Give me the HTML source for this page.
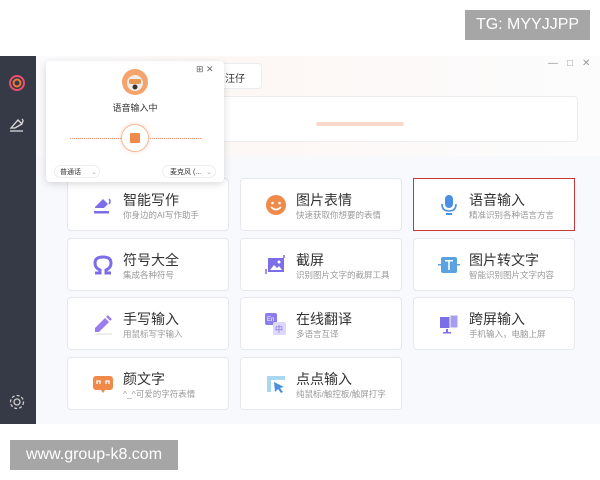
<!DOCTYPE html>
<html><head><meta charset="utf-8"><style>
*{margin:0;padding:0;box-sizing:border-box}
body{width:600px;height:480px;background:#fff;position:relative;overflow:hidden;font-family:"Liberation Sans","Noto Sans CJK SC",sans-serif}
.abs{position:absolute}
.tag{background:#a6a6a6;color:#fff;display:flex;align-items:center;justify-content:center}
#app{left:0;top:56px;width:600px;height:368px;background:#f8f9fc}
#side{left:0;top:56px;width:36px;height:368px;background:#363a47}
.card{position:absolute;width:162px;height:53px;background:#fff;border:1px solid #e6e8ee;border-radius:4px}
.card .ic{position:absolute;left:24px;top:15px;width:22px;height:22px}
.card .t{position:absolute;left:55px;top:11px;font-size:14px;color:#333}
.card .s{position:absolute;left:55px;top:30px;font-size:8.5px;color:#999}
#pop{left:46px;top:61px;width:178px;height:121px;background:#fff;border-radius:4px;box-shadow:0 2px 8px rgba(0,0,0,.15)}
</style></head><body>
<div class="abs tag" style="left:465px;top:10px;width:125px;height:30px;font-size:16px">TG: MYYJJPP</div>
<div class="abs tag" style="left:10px;top:440px;width:168px;height:30px;font-size:16px">www.group-k8.com</div>
<div class="abs" id="app"></div>
<div class="abs" style="left:36px;top:56px;width:564px;height:100px;background:linear-gradient(90deg,#fbfbfd,#fdf8f5 40%,#fcfcfd)"></div>
<div class="abs" style="left:60px;top:96px;width:518px;height:46px;background:#fff;border:1px solid #ebecf0;border-radius:4px"></div>
<div class="abs" style="left:316px;top:122px;width:88px;height:4px;background:#f9d9cc;border-radius:2px"></div>
<div class="abs" style="left:210px;top:63px;width:52px;height:26px;background:#fff;border:1px solid #ebecf0;border-radius:4px;font-size:10px;color:#333;padding:6px 0 0 14px">汪仔</div>
<div class="abs" style="left:548px;top:58px;font-size:10px;color:#999;letter-spacing:9px">—□✕</div>
<div class="abs" id="side"></div>
<svg class="abs" style="left:8px;top:74px" width="18" height="18"><circle cx="9" cy="9" r="7" fill="none" stroke="#e8506e" stroke-width="2"/><circle cx="9" cy="9" r="3.5" fill="none" stroke="#f07a3a" stroke-width="2"/></svg>
<svg class="abs" style="left:8px;top:116px" width="18" height="18"><path d="M3 12 L10 4 L14 8 L7 12 Z M2 15 H15 M14 3 Q16 5 14 7" fill="none" stroke="#ddd" stroke-width="1.3"/></svg>
<svg class="abs" style="left:8px;top:393px" width="18" height="18"><circle cx="9" cy="9" r="3" fill="none" stroke="#ccc" stroke-width="1.3"/><circle cx="9" cy="9" r="6.5" fill="none" stroke="#ccc" stroke-width="1.3" stroke-dasharray="3 2"/></svg>

<div class="card" style="left:67px;top:178px"><svg class="ic" viewBox="0 0 22 22"><path d="M3 13 L11 5 L16 10 L12 14 H3Z" fill="#7b6ee8"/><path d="M17 5 Q19 7 17 10" stroke="#7b6ee8" fill="none" stroke-width="1.5"/><rect x="2" y="17" width="15" height="2.5" fill="#7b6ee8"/></svg><div class="t">智能写作</div><div class="s">你身边的AI写作助手</div></div>
<div class="card" style="left:240px;top:178px"><svg class="ic" viewBox="0 0 22 22"><circle cx="11" cy="11" r="10" fill="#f08a4b"/><circle cx="7.5" cy="9" r="1.3" fill="#fff"/><circle cx="14.5" cy="9" r="1.3" fill="#fff"/><path d="M6 13 Q11 18 16 13" stroke="#fff" stroke-width="1.6" fill="none"/></svg><div class="t">图片表情</div><div class="s">快速获取你想要的表情</div></div>
<div class="card" style="left:413px;top:178px;border:1.5px solid #c8373a;border-radius:0"><svg class="ic" viewBox="0 0 22 22"><rect x="7" y="1" width="8" height="13" rx="4" fill="#4a90e2"/><path d="M4 10 Q4 17 11 17 Q18 17 18 10" stroke="#4a90e2" stroke-width="1.6" fill="none"/><rect x="8" y="19" width="6" height="2" fill="#4a90e2"/></svg><div class="t">语音输入</div><div class="s">精准识别各种语言方言</div></div>

<div class="card" style="left:67px;top:238px"><svg class="ic" viewBox="0 0 22 22"><path d="M3 19 H8 V16 Q3 14 3 9 Q3 3 11 3 Q19 3 19 9 Q19 14 14 16 V19 H19" stroke="#7b6ee8" stroke-width="3" fill="none"/></svg><div class="t">符号大全</div><div class="s">集成各种符号</div></div>
<div class="card" style="left:240px;top:238px"><svg class="ic" viewBox="0 0 22 22"><rect x="3" y="4" width="16" height="14" fill="#7b6ee8"/><path d="M5 16 L9 11 L12 14 L14 12 L17 16Z" fill="#fff"/><circle cx="14" cy="8" r="1.5" fill="#fff"/><path d="M1 15 V20 M19 1 V4" stroke="#7b6ee8" stroke-width="1.5"/></svg><div class="t">截屏</div><div class="s">识别图片文字的截屏工具</div></div>
<div class="card" style="left:413px;top:238px"><svg class="ic" viewBox="0 0 22 22"><rect x="3" y="3" width="16" height="16" rx="2" fill="#5aa3e0"/><rect x="0" y="10" width="22" height="1.5" fill="#5aa3e0"/><rect x="7" y="6" width="8" height="1.5" fill="#fff"/><rect x="10.2" y="6" width="1.6" height="10" fill="#fff"/></svg><div class="t">图片转文字</div><div class="s">智能识别图片文字内容</div></div>

<div class="card" style="left:67px;top:297px"><svg class="ic" viewBox="0 0 22 22"><path d="M3 15 L13 5 L17 9 L7 19 H3Z" fill="#9a7cf0"/><path d="M15 3 L19 7" stroke="#9a7cf0" stroke-width="2.5"/><path d="M3 21 H20" stroke="#ccc" stroke-width="0.8"/></svg><div class="t">手写输入</div><div class="s">用鼠标写字输入</div></div>
<div class="card" style="left:240px;top:297px"><svg class="ic" viewBox="0 0 22 22"><rect x="0" y="0" width="12" height="12" rx="2" fill="#8b7cf0"/><rect x="8" y="9" width="13" height="13" rx="2" fill="#ddd7fb"/><text x="2" y="8" font-size="6" fill="#fff" font-family="Liberation Sans">En</text><text x="10" y="19" font-size="8" fill="#7b6ee8" font-family="Noto Sans CJK SC">中</text></svg><div class="t">在线翻译</div><div class="s">多语言互译</div></div>
<div class="card" style="left:413px;top:297px"><svg class="ic" viewBox="0 0 22 22"><rect x="2" y="4" width="14" height="11" fill="#7b6ee8"/><rect x="8" y="16" width="2" height="3" fill="#7b6ee8"/><rect x="5" y="19" width="8" height="1.5" fill="#7b6ee8"/><rect x="12" y="2" width="8" height="13" rx="1" fill="#a79ef2" stroke="#fff"/></svg><div class="t">跨屏输入</div><div class="s">手机输入，电脑上屏</div></div>

<div class="card" style="left:67px;top:357px"><svg class="ic" viewBox="0 0 22 22"><rect x="1" y="3" width="20" height="14" rx="3" fill="#f08a4b"/><path d="M9 17 L11 20 L13 17Z" fill="#f08a4b"/><path d="M5 11 V8 H8 V11 M14 11 V8 H17 V11" stroke="#fff" stroke-width="1.3" fill="none"/></svg><div class="t">颜文字</div><div class="s">^_^可爱的字符表情</div></div>
<div class="card" style="left:240px;top:357px"><svg class="ic" viewBox="0 0 22 22"><rect x="2" y="3" width="18" height="4" fill="#a8d8f0"/><rect x="2" y="3" width="4" height="16" fill="#a8d8f0"/><path d="M9 9 L19 14 L15 15 L18 19 L16 20 L13 16 L10 19Z" fill="#4a90e2"/></svg><div class="t">点点输入</div><div class="s">纯鼠标/触控板/触屏打字</div></div>

<div class="abs" id="pop">
<svg class="abs" style="left:75px;top:7px" width="28" height="28"><circle cx="14" cy="14" r="13" fill="#f5a36b"/><circle cx="14" cy="15" r="8" fill="#f3ece6"/><rect x="8" y="11" width="12" height="5" rx="2" fill="#e8964f"/><circle cx="14" cy="19" r="2.5" fill="#333"/></svg>
<div class="abs" style="left:0;width:178px;top:40px;text-align:center;font-size:9px;color:#333">语音输入中</div>
<div class="abs" style="left:24px;top:77px;width:53px;border-top:1.5px dotted #f08a6a"></div>
<div class="abs" style="left:102px;top:77px;width:53px;border-top:1.5px dotted #f08a6a"></div>
<div class="abs" style="left:75px;top:63px;width:28px;height:28px;border-radius:50%;background:#fff;border:1px solid #f2b89a;box-shadow:0 0 4px rgba(240,138,106,.35)"></div>
<div class="abs" style="left:84px;top:72px;width:10px;height:10px;background:#f08a4b;border-radius:1px"></div>
<div class="abs" style="left:150px;top:3px;font-size:9px;color:#666">⊞ ✕</div>
<div class="abs" style="left:8px;top:104px;width:46px;height:13px;border:1px solid #eee;border-radius:7px;font-size:7px;color:#333;padding:1px 0 0 5px">普通话 <span style="color:#aaa;margin-left:8px">⌄</span></div>
<div class="abs" style="left:116px;top:104px;width:54px;height:13px;border:1px solid #eee;border-radius:7px;font-size:7px;color:#333;padding:1px 0 0 7px">麦克风 (...<span style="color:#aaa;margin-left:5px">⌄</span></div>
</div>
</body></html>
